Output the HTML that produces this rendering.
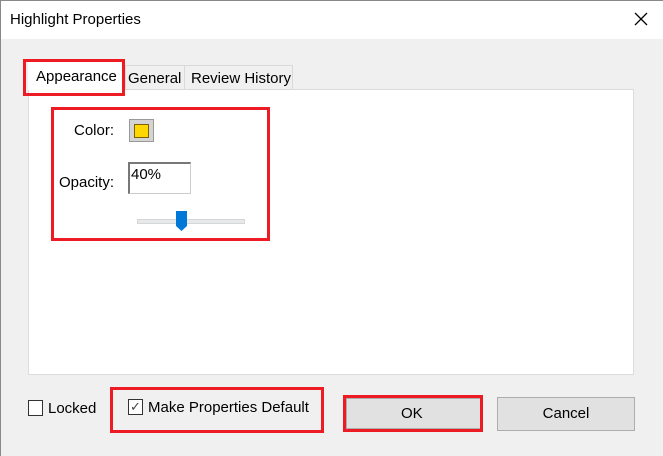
<!DOCTYPE html>
<html><head><style>
body{margin:0;width:663px;height:456px;overflow:hidden;background:#f0f0f0;font-family:"Liberation Sans",sans-serif;font-size:14px;color:#000;position:relative}
.a{position:absolute;box-sizing:border-box}
.red{border:3px solid #ed1c24}
</style></head><body>
<div class="a" style="left:0;top:0;width:663px;height:39px;background:#fff;border-left:1px solid #888;border-top:1px solid #888"></div>
<div class="a" style="left:0;top:39px;width:1px;height:417px;background:#888"></div>
<div class="a" style="left:10px;top:11px;font-size:15px">Highlight Properties</div>
<svg class="a" style="left:634px;top:12px" width="14" height="14"><path d="M1 1L13 13M13 1L1 13" stroke="#000" stroke-width="1.3"/></svg>
<div class="a" style="left:28px;top:89px;width:606px;height:286px;background:#fff;border:1px solid #dcdcdc"></div>
<div class="a" style="left:125px;top:65px;width:60px;height:25px;border:1px solid #d9d9d9;background:#f0f0f0"></div>
<div class="a" style="left:184px;top:65px;width:109px;height:25px;border:1px solid #d9d9d9;background:#f0f0f0"></div>
<div class="a" style="left:28px;top:62px;width:96px;height:28px;background:#fff"></div>
<div class="a" style="left:36px;top:68px;font-size:15px">Appearance</div>
<div class="a" style="left:128px;top:70px;font-size:15px">General</div>
<div class="a" style="left:191px;top:70px;font-size:15px">Review History</div>
<div class="a red" style="left:23px;top:59px;width:102px;height:37px"></div>
<div class="a red" style="left:51px;top:107px;width:219px;height:134px"></div>
<div class="a" style="left:74px;top:122px;font-size:15px">Color:</div>
<div class="a" style="left:129px;top:119px;width:25px;height:23px;background:#d4d4d4;border:1px solid #999"></div>
<div class="a" style="left:134px;top:124px;width:15px;height:14px;background:#ffd700;border:1px solid #806000"></div>
<div class="a" style="left:59px;top:174px;font-size:15px">Opacity:</div>
<div class="a" style="left:128px;top:162px;width:63px;height:32px;background:#fff;border:1px solid #ccc;border-top:2px solid #777;border-left:2px solid #777"></div>
<div class="a" style="left:131px;top:166px;font-size:15px">40%</div>
<div class="a" style="left:137px;top:219px;width:108px;height:5px;background:#e7eaea;border:1px solid #d6d6d6"></div>
<svg class="a" style="left:176px;top:211px" width="11" height="20"><path d="M0 0H11V15L5.5 20L0 15Z" fill="#0078d7"/></svg>
<div class="a" style="left:28px;top:400px;width:15px;height:16px;background:#fff;border:1px solid #333"></div>
<div class="a" style="left:48px;top:400px;font-size:15px">Locked</div>
<div class="a red" style="left:110px;top:387px;width:214px;height:46px"></div>
<div class="a" style="left:128px;top:399px;width:15px;height:16px;background:#fff;border:1px solid #333;font-size:13px;line-height:14px;text-align:center;color:#444">✓</div>
<div class="a" style="left:148px;top:399px;font-size:15px">Make Properties Default</div>
<div class="a" style="left:346px;top:398px;width:135px;height:31px;background:#e1e1e1;border:1px solid #adadad"></div>
<div class="a red" style="left:343px;top:395px;width:140px;height:37px"></div>
<div class="a" style="left:401px;top:405px;font-size:15px">OK</div>
<div class="a" style="left:497px;top:397px;width:138px;height:34px;background:#e1e1e1;border:1px solid #adadad;text-align:center;line-height:31px;font-size:15px">Cancel</div>
</body></html>
